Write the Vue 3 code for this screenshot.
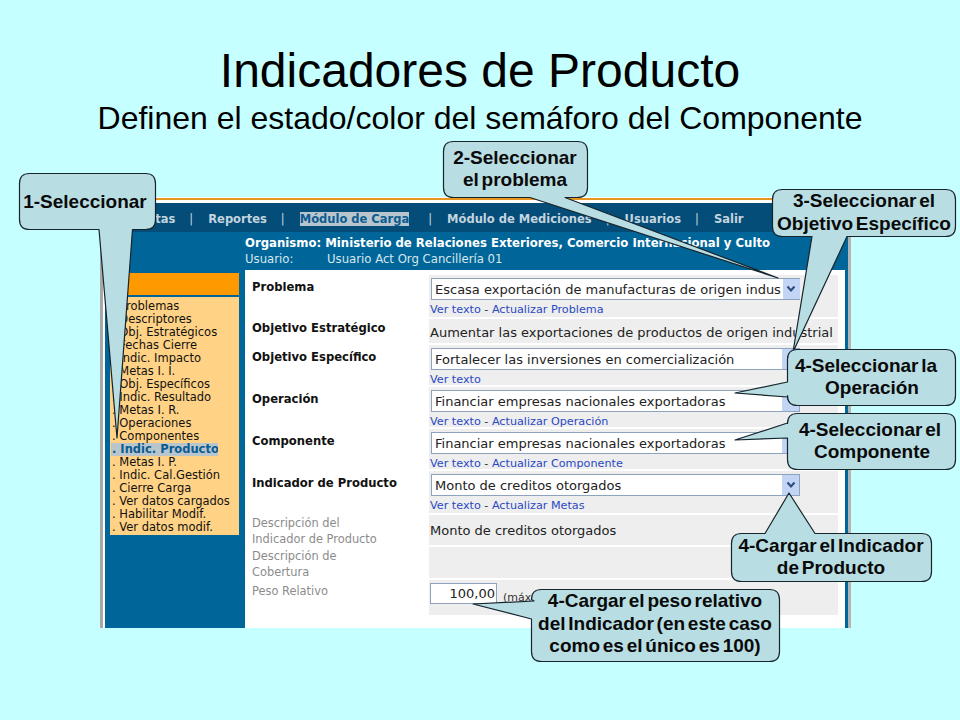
<script setup>
const navItems = [
  { text: 'Metas' }, { text: 'Reportes' }, { text: 'Módulo de Carga', active: true },
  { text: 'Módulo de Mediciones' }, { text: 'Usuarios' }, { text: 'Salir' }
]
const menu = ['Problemas','Descriptores','Obj. Estratégicos','Fechas Cierre','Indic. Impacto','Metas I. I.','Obj. Específicos','Indic. Resultado','Metas I. R.','Operaciones','Componentes','Indic. Producto','Metas I. P.','Indic. Cal.Gestión','Cierre Carga','Ver datos cargados','Habilitar Modif.','Ver datos modif.']
const rows = [
  { label: 'Problema', kind: 'select', value: 'Escasa exportación de manufacturas de origen indus', links: 'Actualizar Problema', h: 'h42' },
  { label: 'Objetivo Estratégico', kind: 'text', value: 'Aumentar las exportaciones de productos de origen industrial', h: 'h24' },
  { label: 'Objetivo Específico', kind: 'select', value: 'Fortalecer las inversiones en comercialización', h: 'h40' },
  { label: 'Operación', kind: 'select', value: 'Financiar empresas nacionales exportadoras', links: 'Actualizar Operación', h: 'h40' },
  { label: 'Componente', kind: 'select', value: 'Financiar empresas nacionales exportadoras', links: 'Actualizar Componente', h: 'h40' },
  { label: 'Indicador de Producto', kind: 'select', value: 'Monto de creditos otorgados', links: 'Actualizar Metas', h: 'h42' },
  { label: 'Descripción del\nIndicador de Producto', minor: true, kind: 'text', value: 'Monto de creditos otorgados', h: 'h30' },
  { label: 'Descripción de\nCobertura', minor: true, kind: 'empty', h: 'h31' },
  { label: 'Peso Relativo', minor: true, kind: 'input', value: '100,00', h: 'h35' }
]
function shape(x, y, w, h, side, tail) {
  const r = 10, R = x + w, B = y + h
  const pts = tail.map(p => `L${p[0]} ${p[1]}`).join(' ')
  return [
    `M${x + r} ${y}`, side === 'top' ? pts : '', `L${R - r} ${y} Q${R} ${y} ${R} ${y + r}`,
    `L${R} ${B - r} Q${R} ${B} ${R - r} ${B}`, side === 'bottom' ? pts : '',
    `L${x + r} ${B} Q${x} ${B} ${x} ${B - r}`, side === 'left' ? pts : '',
    `L${x} ${y + r} Q${x} ${y} ${x + r} ${y} Z`
  ].join(' ')
}
const callouts = [
  { d: shape(19.5, 173.5, 136, 56, 'bottom', [[132.5, 229.5], [117, 438], [99, 229.5]]), lines: [{ t: '1-Seleccionar', x: 85, y: 208 }] },
  { d: shape(443.5, 141.5, 144, 56, 'bottom', [[565, 197.5], [778, 278], [530, 197.5]]), lines: [{ t: '2-Seleccionar', x: 515, y: 164 }, { t: 'el problema', x: 515, y: 186 }] },
  { d: shape(772.5, 189.5, 183, 47, 'bottom', [[847, 236.5], [793, 352], [812, 236.5]]), lines: [{ t: '3-Seleccionar el', x: 864, y: 207 }, { t: 'Objetivo Específico', x: 864, y: 230 }] },
  { d: shape(787.5, 349.5, 168, 56, 'left', [[787.5, 397], [735, 393], [787.5, 382]]), lines: [{ t: '4-Seleccionar la', x: 866, y: 372 }, { t: 'Operación', x: 872, y: 394 }] },
  { d: shape(787.5, 413.5, 168, 56, 'left', [[787.5, 438], [735, 440], [787.5, 423]]), lines: [{ t: '4-Seleccionar el', x: 870, y: 436 }, { t: 'Componente', x: 872, y: 458 }] },
  { d: shape(731.5, 533.5, 200, 48, 'top', [[765, 533.5], [789, 493], [815, 533.5]]), lines: [{ t: '4-Cargar el Indicador', x: 831, y: 552 }, { t: 'de Producto', x: 831, y: 574 }] },
  { d: shape(531.5, 589.5, 248, 72, 'left', [[531.5, 619], [473, 604], [534, 601]]), lines: [{ t: '4-Cargar el peso relativo', x: 655, y: 607 }, { t: 'del Indicador (en este caso', x: 655, y: 630 }, { t: 'como es el único es 100)', x: 655, y: 652 }] }
]
</script>

<template>
  <div class="page">
    <header class="heading">
      <h1>Indicadores de Producto</h1>
      <h2>Definen el estado/color del semáforo del Componente</h2>
    </header>

    <section class="shot">
      <nav class="nav">
        <template v-for="(item, i) in navItems" :key="item.text">
          <span v-if="i" class="pipe">|</span>
          <span class="nav-item" :class="{ active: item.active }">{{ item.text }}</span>
        </template>
      </nav>
      <div class="body">
        <aside class="side">
          <div class="side-head"></div>
          <ul class="menu">
            <li v-for="m in menu" :key="m" :class="{ current: m === 'Indic. Producto' }">. {{ m }}</li>
          </ul>
        </aside>
        <div class="main">
          <div class="org">
            <div class="org-name">Organismo: Ministerio de Relaciones Exteriores, Comercio Internacional y Culto</div>
            <div class="user"><span class="user-key">Usuario:</span><span>Usuario Act Org Cancillería 01</span></div>
          </div>
          <div class="form">
            <div v-for="r in rows" :key="r.label" class="row" :class="r.h">
              <div class="label" :class="{ minor: r.minor }">{{ r.label }}</div>
              <div class="field">
                <template v-if="r.kind === 'select'">
                  <div class="select">
                    <span class="select-text">{{ r.value }}</span>
                    <span class="arrow">
                      <svg width="10" height="8" viewBox="0 0 10 8"><path d="M1.5 1.5 5 5.5 8.5 1.5" fill="none" stroke="#2c4a7c" stroke-width="2"/></svg>
                    </span>
                  </div>
                  <div class="links"><a>Ver texto</a><template v-if="r.links"> - <a>{{ r.links }}</a></template></div>
                </template>
                <div v-else-if="r.kind === 'text'" class="plain">{{ r.value }}</div>
                <div v-else-if="r.kind === 'input'" class="weight">
                  <span class="input">{{ r.value }}</span>
                  <span class="max">(máx</span>
                </div>
              </div>
            </div>
          </div>
        </div>
      </div>
    </section>

    <svg class="overlay" width="960" height="720" viewBox="0 0 960 720">
      <g v-for="(c, i) in callouts" :key="i">
        <path :d="c.d" fill="#b8dde3" stroke="#16242c" stroke-width="1.2" stroke-linejoin="round"/>
        <text v-for="l in c.lines" :key="l.t" :x="l.x" :y="l.y" text-anchor="middle" class="callout-text">{{ l.t }}</text>
      </g>
    </svg>
  </div>
</template>

<style>
html, body { margin: 0; background: #c6ffff; }
</style>

<style scoped>
.page { position: relative; width: 960px; height: 720px; background: #c6ffff; overflow: hidden; font-family: "Liberation Sans", Arial, sans-serif; color: #000; }
.heading { height: 197px; box-sizing: border-box; padding-top: 42px; text-align: center; }
h1 { margin: 0; font-size: 48px; line-height: 58px; font-weight: 400; }
h2 { margin: 0; font-size: 32px; line-height: 36px; font-weight: 400; }
.shot { margin-left: 100px; width: 751px; height: 431px; box-sizing: border-box; background: #fff; border-left: 3px solid #a8a8a8; border-right: 3px solid #b4b4b4; display: flex; flex-direction: column; font-family: "DejaVu Sans", Verdana, sans-serif; }
.nav { box-sizing: border-box; height: 34px; margin: 1px 0 0 2px; border-top: 2px solid #e8951f; box-shadow: inset 0 3px 0 #fff; padding: 6px 0 0 31px; background: #034d78; display: flex; align-items: center; gap: 14px; font-size: 11.5px; font-weight: 700; color: #c3d4df; white-space: nowrap; }
.nav-item.active { background: #b9c5cd; color: #0a5c92; margin-right: 5px; }
.pipe { font-weight: 400; margin-right: 1px; }
.body { flex: 1; display: flex; margin-left: 2px; background: #006699; min-height: 0; }
.side { width: 140px; box-sizing: border-box; padding: 41px 6px 0 5px; flex: none; }
.side-head { height: 22px; background: #ff9900; margin-bottom: 2px; }
.menu { list-style: none; margin: 0; padding: 2.5px 0 1.5px 2px; background: #ffd285; font-size: 11.5px; line-height: 13px; color: #111; white-space: nowrap; }
.menu li.current { background: #b9c5cd; color: #0a5c92; font-weight: 700; width: 107px; margin-left: -1px; padding-left: 1px; box-sizing: border-box; overflow: hidden; }
.main { flex: 1; display: flex; flex-direction: column; min-width: 0; padding-right: 3px; }
.org { height: 38px; box-sizing: border-box; padding: 3px 0 0 0; font-size: 11.7px; line-height: 16px; color: #fff; white-space: nowrap; }
.org-name { font-weight: 700; }
.user { display: flex; color: #d8e6ee; }
.user-key { width: 82px; }
.form { flex: 1; background: #fff; padding-top: 5px; display: flex; flex-direction: column; gap: 2px; }
.row { display: grid; grid-template-columns: 184px 409px; grid-template-rows: 100%; flex: none; }
.h42 { height: 42px; } .h24 { height: 24px; } .h40 { height: 40px; } .h30 { height: 30px; } .h31 { height: 31px; } .h35 { height: 35px; }
.label { padding: 5px 0 0 7px; font-size: 11.6px; line-height: 14px; font-weight: 700; color: #111; white-space: pre-line; }
.h24 .label { padding-top: 2px; }
.label.minor { padding-top: 1px; font-weight: 400; font-size: 11.4px; line-height: 15.5px; color: #8c8c8c; }
.h31 .label.minor { padding-top: 2px; }
.h35 .label.minor { padding-top: 4px; }
.field { background: #eee; padding: 3px 0 0 2px; display: flex; flex-direction: column; }
.select { box-sizing: border-box; width: 369px; height: 22px; border: 1px solid #8ea3bd; background: #fff; display: flex; align-items: center; padding-left: 3px; flex: none; }
.select-text { flex: 1; white-space: nowrap; font-size: 13px; color: #222; }
.arrow { width: 17px; height: 20px; flex: none; background: #c3d5f5; display: flex; align-items: center; justify-content: center; margin-left: 2px; }
.links { margin: 4px 0 0 -1px; font-size: 11.2px; line-height: 12px; color: #333; white-space: nowrap; }
.links a { color: #2a49c4; }
.plain { font-size: 13px; line-height: 16px; color: #222; margin: 3px 0 0 -1px; white-space: nowrap; }
.h30 .plain { margin-top: 5px; }
.weight { display: flex; align-items: flex-start; gap: 6px; margin-left: -1px; }
.input { box-sizing: border-box; width: 67px; height: 21px; border: 1px solid #8ea3bd; background: #fff; text-align: right; padding-right: 1px; font-size: 13px; line-height: 19px; color: #222; }
.max { font-size: 11px; line-height: 29px; color: #333; }
.overlay { position: absolute; left: 0; top: 0; pointer-events: none; }
.callout-text { font-family: "Liberation Sans", Arial, sans-serif; font-weight: 700; font-size: 19px; word-spacing: -2.5px; fill: #0a0a0a; }
</style>
